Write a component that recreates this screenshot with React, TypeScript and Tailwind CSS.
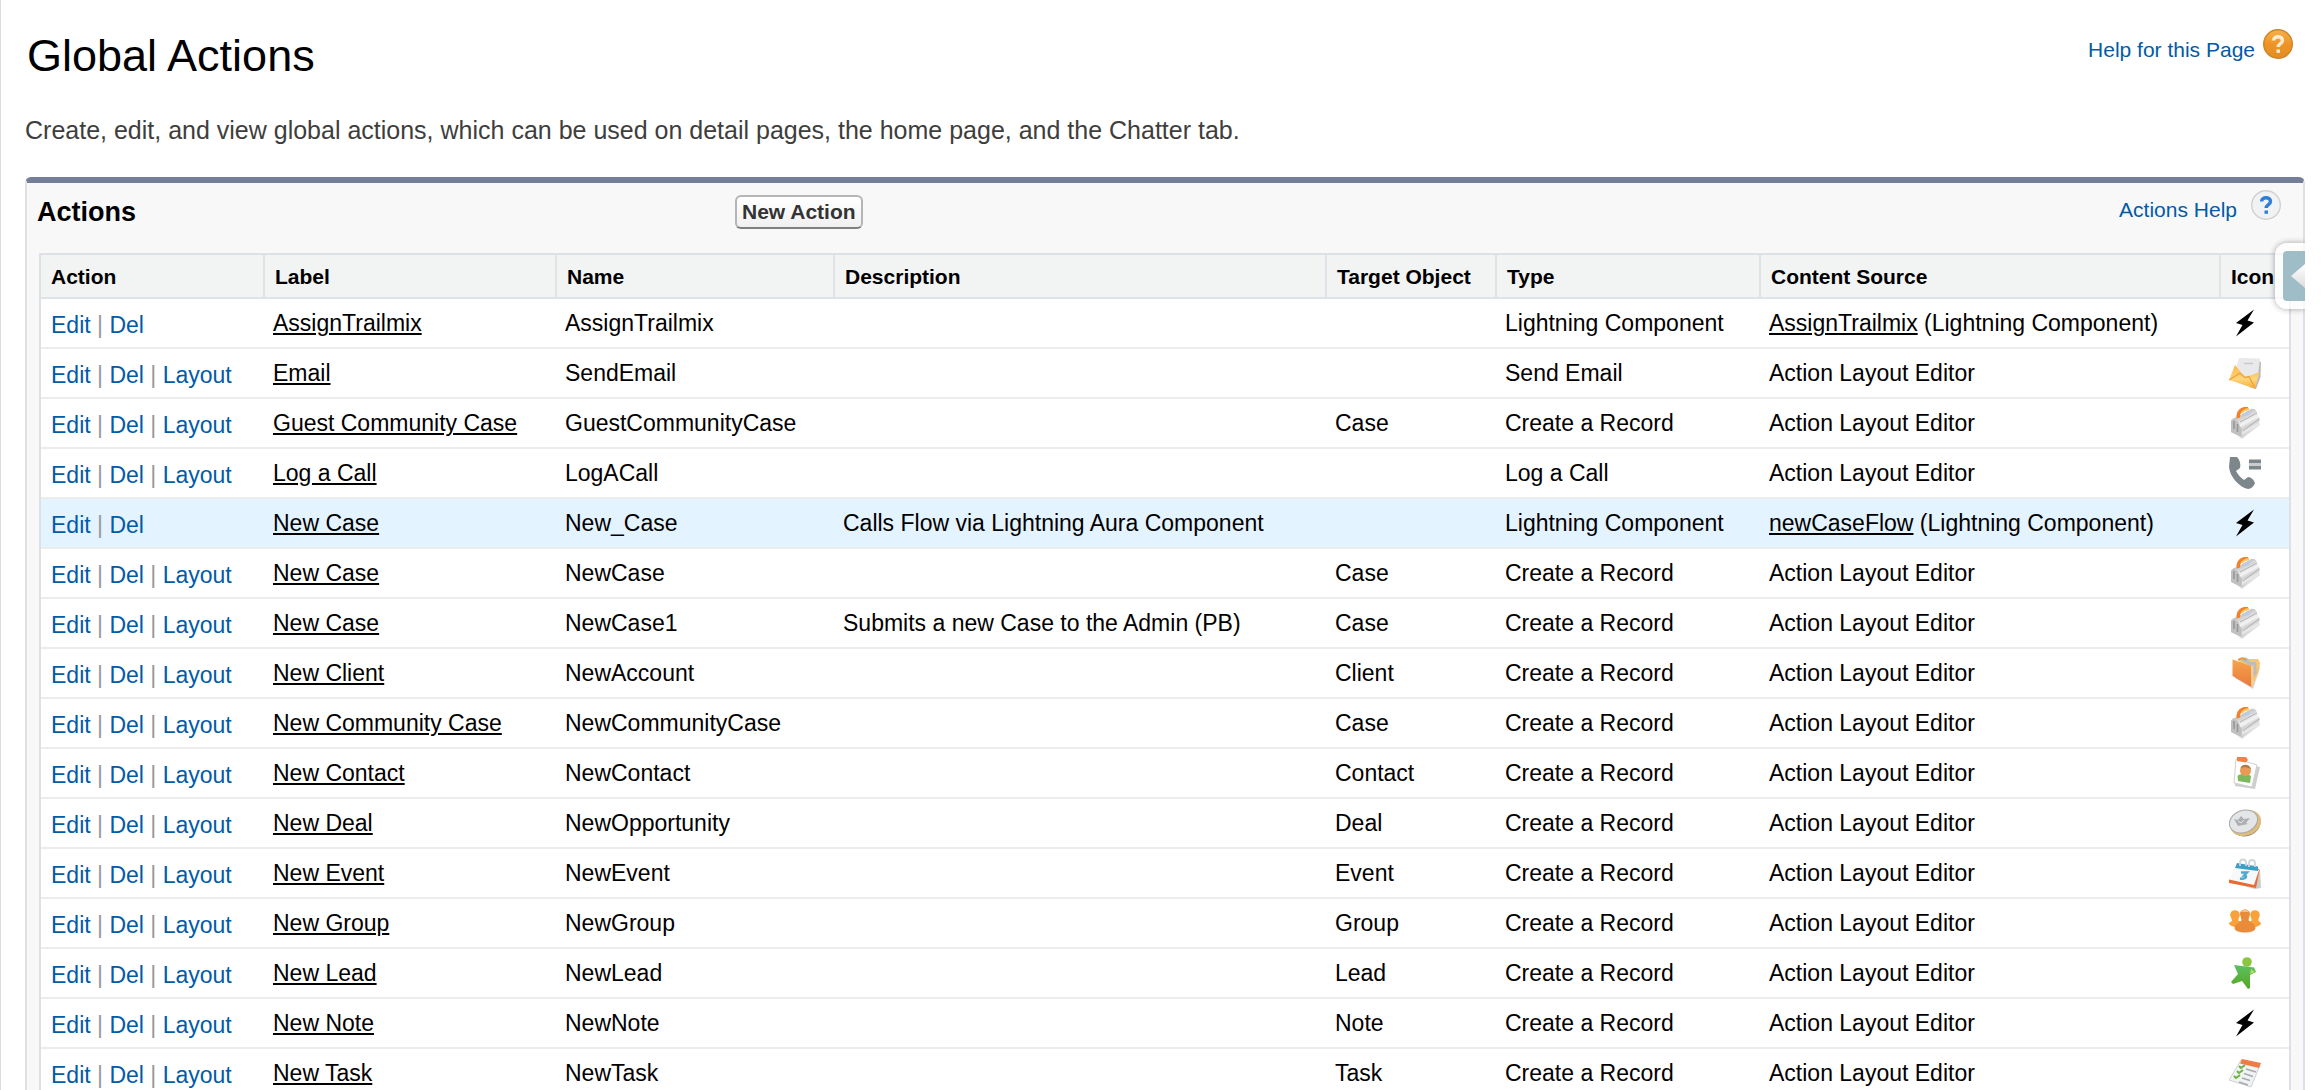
import React from "react";

type Kind =
  | "bolt" | "mail" | "case" | "phone" | "folder" | "contact" | "deal" | "event" | "group" | "lead" | "task";

interface Row {
  label: string;
  name: string;
  description?: string;
  target?: string;
  type: string;
  source?: string;
  icon: Kind;
  layout?: boolean;
  active?: boolean;
}

const REC = "Create a Record";

const rows: Row[] = [
  { label: "AssignTrailmix", name: "AssignTrailmix", type: "Lightning Component", source: "AssignTrailmix", icon: "bolt", layout: false },
  { label: "Email", name: "SendEmail", type: "Send Email", icon: "mail" },
  { label: "Guest Community Case", name: "GuestCommunityCase", target: "Case", type: REC, icon: "case" },
  { label: "Log a Call", name: "LogACall", type: "Log a Call", icon: "phone" },
  { label: "New Case", name: "New_Case", description: "Calls Flow via Lightning Aura Component", type: "Lightning Component", source: "newCaseFlow", icon: "bolt", layout: false, active: true },
  { label: "New Case", name: "NewCase", target: "Case", type: REC, icon: "case" },
  { label: "New Case", name: "NewCase1", description: "Submits a new Case to the Admin (PB)", target: "Case", type: REC, icon: "case" },
  { label: "New Client", name: "NewAccount", target: "Client", type: REC, icon: "folder" },
  { label: "New Community Case", name: "NewCommunityCase", target: "Case", type: REC, icon: "case" },
  { label: "New Contact", name: "NewContact", target: "Contact", type: REC, icon: "contact" },
  { label: "New Deal", name: "NewOpportunity", target: "Deal", type: REC, icon: "deal" },
  { label: "New Event", name: "NewEvent", target: "Event", type: REC, icon: "event" },
  { label: "New Group", name: "NewGroup", target: "Group", type: REC, icon: "group" },
  { label: "New Lead", name: "NewLead", target: "Lead", type: REC, icon: "lead" },
  { label: "New Note", name: "NewNote", target: "Note", type: REC, icon: "bolt" },
  { label: "New Task", name: "NewTask", target: "Task", type: REC, icon: "task" },
];

function Gradients() {
  return (
    <svg className="absolute h-0 w-0" aria-hidden="true">
      <defs>
        <linearGradient id="steel" gradientUnits="userSpaceOnUse" x1="12" y1="4" x2="24" y2="26">
          <stop offset="0" stopColor="#b5b5b5" />
          <stop offset=".3" stopColor="#d8d8d8" />
          <stop offset=".5" stopColor="#f4f4f4" />
          <stop offset=".65" stopColor="#cfcfcf" />
          <stop offset=".8" stopColor="#ebebeb" />
          <stop offset="1" stopColor="#b8b8b8" />
        </linearGradient>
        <linearGradient id="envelope" x1="0" y1="0" x2="0" y2="1">
          <stop offset="0" stopColor="#fbb64a" />
          <stop offset=".6" stopColor="#fdd67c" />
          <stop offset="1" stopColor="#f8ab38" />
        </linearGradient>
        <linearGradient id="folder" x1="0" y1="0" x2="0" y2="1">
          <stop offset="0" stopColor="#f6a44c" />
          <stop offset="1" stopColor="#e8793c" />
        </linearGradient>
        <linearGradient id="person" x1="0" y1="0" x2="0" y2="1">
          <stop offset="0" stopColor="#5cbf63" />
          <stop offset="1" stopColor="#55a81f" />
        </linearGradient>
        <linearGradient id="orb" x1="0" y1="0" x2="0" y2="1">
          <stop offset="0" stopColor="#f6b14e" />
          <stop offset=".5" stopColor="#ef9426" />
          <stop offset="1" stopColor="#e08e26" />
        </linearGradient>
        <linearGradient id="arrow" x1="0" y1="0" x2="0" y2="1">
          <stop offset="0" stopColor="#ffffff" />
          <stop offset="1" stopColor="#dcdcdc" />
        </linearGradient>
      </defs>
    </svg>
  );
}

function art(kind: Kind) {
  switch (kind) {
    case "bolt":
      return <path d="M25 2.500 7 16l6.500 2L7 29.500 25 15.500 18.500 13.500Z" fill="#000" />;
    case "mail":
      return (
        <>
          <path d="M25 3 32 5 31.500 20 27 32 20 30Z" fill="#9d9d9d" opacity=".7" />
          <path d="M10 1 31 1.500 29 18 16 22 7 11Z" fill="#e9e9eb" />
          <path d="M15 6.500h9" stroke="#c9c9cc" strokeWidth="1.500" />
          <path d="M6 8 16 20.500 30.500 15 26 31.500 0 23Z" fill="url(#envelope)" />
          <path d="M0 23 11 16 16 20.500 20 19.500 26 31.500" fill="none" stroke="#f0a13a" strokeWidth="1.300" />
        </>
      );
    case "case":
      return (
        <>
          <path d="M3 25 13 32 31 18 29 12Z" fill="#cfcfcf" opacity=".6" />
          <path d="M2 14Q3 11 8 10L22 2Q27 1 28 6L31 12 29 18 13 30.500 2 25Z" fill="url(#steel)" />
          <path d="M2 14Q6 10 9 15L13 23 12.500 30 2 25Z" fill="#c0c0c0" />
          <path d="M5 14v8M8.500 17v8" stroke="#979797" strokeWidth="1.600" />
          <path d="m11 15 17-9M14 24 30 12" fill="none" stroke="#b3b3b3" strokeWidth="1" />
          <path d="m13 10 4-5 4-1-1 4Z" fill="#b9cbe9" />
          <path d="M9.500 11C8 5 13 1 19 1.500" fill="none" stroke="#f0802c" strokeWidth="3.600" />
          <path d="M12.500 6C15 3 17 2 20 2" fill="none" stroke="#fdc75a" strokeWidth="2.200" />
        </>
      );
    case "phone":
      return (
        <>
          <path d="M1 0 8 0C11 3 12 8 11 11L7 14C9 18 12 21 15 23L19 20C22 20 25 23 26 26 25 29 22 32 19 32 10 30 1 20 0 10Z" fill="#7c868b" />
          <path d="M20 2.500h12v3.500H20zM20 9h12v3.500H20z" fill="#7c868b" />
          <path d="M20 6h12v3H20z" fill="#c8cdcf" />
        </>
      );
    case "folder":
      return (
        <>
          <path d="M6 21 24 32 31 11 29 5Z" fill="#a9a9a9" opacity=".5" />
          <path d="M9 2 16 0 19 2 29 2 31 6 29 17 23 28Z" fill="#fbc56a" />
          <path d="M11 3 18 1 21 5 27 5 28 16 22 24 20 8Z" fill="#bcbcbc" />
          <path d="M9 3 13 1 17 3" fill="none" stroke="#ef8a45" strokeWidth="1.500" />
          <path d="M3.500 2.500 22 9 22.500 30 3.500 19Z" fill="url(#folder)" />
          <path d="M22 9 24.500 8 24 29 22.500 30Z" fill="#fbd084" />
        </>
      );
    case "contact":
      return (
        <>
          <path d="M7 6 31 10 26 32 6 29Z" fill="#b9b9b9" opacity=".7" />
          <path d="M7 2 22 6 28 8 23 30 5 26Z" fill="#fff" stroke="#cfcfcf" />
          <path d="M8 0h9l2 3-2 2.500-9-1.500Z" fill="#f08248" />
          <path d="M8.500 19C11 16 20 17 22 19L21 26 9 24Z" fill="#7db85c" />
          <circle cx="16.500" cy="13.500" r="5.500" fill="#e99a55" />
          <path d="M11.500 11C13 6 21 7 22 12 18 10 15 10 11.500 11Z" fill="#a97c4b" />
        </>
      );
    case "deal":
      return (
        <>
          <ellipse cx="17" cy="17" rx="15" ry="12" fill="#8d8571" transform="rotate(-22 17 17)" />
          <ellipse cx="16.500" cy="16" rx="16" ry="12.500" fill="#dfbd7b" transform="rotate(-22 16.500 16)" />
          <ellipse cx="14.500" cy="14.500" rx="14.500" ry="11" fill="#e3e5e7" stroke="#a7a9a8" transform="rotate(-22 14.500 14.500)" />
          <path d="m5 12 4 1 3-4 3 3 6-1-4 5 2 1-10 2Z" fill="#adb0b3" />
          <path d="m9 14 3 2 3-3" fill="none" stroke="#e3e5e7" />
        </>
      );
    case "event":
      return (
        <>
          <path d="M4 26 26 32 32 31 31 12Z" fill="#a9a9a9" opacity=".6" />
          <path d="M0 22 25 27 29 11.500 30.500 13 27 31 0 26Z" fill="#e96a32" />
          <path d="M6 10 30 13 25 28 0 22.500Z" fill="#f7f8f9" />
          <path d="m8 6 21 3.500v4.500L6 11Z" fill="#3b9fc6" />
          <path d="M11 9V5.500a3 3 0 0 1 6 0V9M20 10V6a3 3 0 0 1 6 0v4" fill="none" stroke="#cfd5d9" strokeWidth="1.800" />
          <path d="M12 15.500h6l-3 3c4 0 2 4-4 3" fill="none" stroke="#4fa9cd" strokeWidth="2.400" />
        </>
      );
    case "group":
      return (
        <>
          <g fill="#f9a13a">
            <circle cx="6" cy="8" r="4.800" />
            <circle cx="26" cy="8" r="4.800" />
            <path d="M2.500 11h7v3h4l-5 6C3 20 0 18 0 16l3-2ZM22.500 11h7v3l2.500 2c0 2-3 4-8 4l-5-6h3.500Z" />
          </g>
          <path d="M11 7c0-6 10-6 10 0l-1.500 6 1 2c4 1 6 4 6 6 0 6-21 6-21 0 0-2 2-5 6-6l1-2Z" fill="#e98b38" />
          <path d="M12.500 5c0-3 7-3 7 0" fill="#f7bf85" />
        </>
      );
    case "lead":
      return (
        <>
          <circle cx="18" cy="5" r="4.800" fill="#8cc63f" />
          <path d="M5 8 17 9.500 25 10.500 27 15 21 18 21 31 19 32 13 24 4 27 2 25 9 17Z" fill="url(#person)" />
          <path d="m22 12 4 3-5 2" fill="#b6dc5c" />
        </>
      );
    case "task":
      return (
        <>
          <path d="M12 3 31 8 22 30 0 23Z" fill="#f1f2f3" stroke="#cdd0d2" />
          <path d="M13 2 32 6 30 11 11 6.500Z" fill="#ee7d45" />
          <path d="m17 12 10 3M15 16.500l9 3M13 21l8 2.500M10 25l9 3" stroke="#a7acb0" strokeWidth="1.600" />
          <path d="m10 9 2 2 4-3M8 14l2 2 4-3M5 19l2 2 4-3" fill="none" stroke="#6cb33f" strokeWidth="2" />
        </>
      );
  }
}

function ActionIcon({ kind }: { kind: Kind }) {
  return (
    <svg viewBox="0 0 32 32" className="block h-8 w-8" role="img" aria-label={kind}>
      {art(kind)}
    </svg>
  );
}

function HelpOrb({ warm }: { warm?: boolean }) {
  return (
    <svg viewBox="0 0 30 30" className="block h-[30px] w-[30px]" aria-hidden="true">
      <circle cx="15" cy="15" r="14.300" fill={warm ? "url(#orb)" : "#f1f2f4"} stroke={warm ? "#cf8426" : "#d0d0d0"} strokeWidth="1.400" />
      <path
        d="M10.500 11.500c.3-5 9-5 9 0 0 3.200-4.300 3-4.300 6.500"
        fill="none"
        stroke={warm ? "#fdebcf" : "#2f7fd6"}
        strokeWidth="3.400"
      />
      <path d="M13.500 20.500h3.500v3.300h-3.500z" fill={warm ? "#fdebcf" : "#2f7fd6"} />
    </svg>
  );
}

function SideTab() {
  return (
    <div className="absolute top-[52px] -right-0.5 overflow-hidden py-2 pl-2">
      <button
        type="button"
        aria-label="Open sidebar"
        className="flex h-[66px] w-[30px] items-center justify-end rounded-l-xl bg-white/70 shadow-[0_0_6px_rgba(0,0,0,0.35)]"
      >
        <span className="flex h-[50px] w-[22px] items-center justify-end rounded-l-sm bg-[#9fbdc7]">
          <svg viewBox="0 0 14 26" className="h-[26px] w-[14px]" aria-hidden="true">
            <path d="M14 1v24L0 13Z" fill="url(#arrow)" />
          </svg>
        </span>
      </button>
    </div>
  );
}

const link = "text-[#015ba7] hover:underline";
const th = "border-r-2 border-b-2 border-[#dfe3e7] px-2.5 pt-2.5 pb-2 text-left align-top text-[21px] leading-6 font-bold whitespace-nowrap last:border-r-0";
const td = "h-[50px] border-b-2 border-[#ececec] px-2 pt-[11px] align-top whitespace-nowrap";

export default function App() {
  return (
    <div className="h-screen overflow-hidden border-l border-[#dcdcdc] bg-white pr-[17px] pl-6 font-['Liberation_Sans',Arial,sans-serif] text-[23px] leading-[26px] text-black">
      <Gradients />
      <header className="flex items-start justify-between pt-[29px] pr-3 pl-0.5">
        <h1 className="text-[45px] leading-[54px]">Global Actions</h1>
        <a href="#help" className={"flex items-start gap-2 text-[21px] leading-6 " + link}>
          <span className="pt-[9px]">Help for this Page</span>
          <HelpOrb warm />
        </a>
      </header>
      <p className="pt-[33px] text-[25px] leading-7 text-[#3e3e3c]">
        Create, edit, and view global actions, which can be used on detail pages, the home page, and the Chatter tab.
      </p>

      <section className="relative mt-[33px] rounded-t-md border-x-2 border-t-6 border-x-[#dde1e5] border-t-[#747e96] bg-[#f8f8f8] px-3">
        <div className="flex h-[70px] items-start">
          <h2 className="w-[696px] pt-[13px] text-[27px] leading-8 font-bold -indent-0.5">Actions</h2>
          <button
            type="button"
            className="mt-3 h-[34px] rounded-md border-2 border-[#b5b5b5] border-b-[#7f7f7f] bg-linear-to-b from-white to-[#f0f0f0] px-[5px] text-[21px] leading-7 font-bold text-[#333]"
          >
            New Action
          </button>
          <a href="#actions-help" className={"mt-[7px] mr-2.5 ml-auto flex items-start gap-[14px] text-[21px] leading-6 " + link}>
            <span className="pt-2">Actions Help</span>
            <HelpOrb />
          </a>
        </div>

        <div className="border-x-2 border-t-2 border-[#dde1e5] bg-white">
          <table className="w-full table-fixed border-separate border-spacing-0">
            <colgroup>
              <col className="w-[224px]" />
              <col className="w-[292px]" />
              <col className="w-[278px]" />
              <col className="w-[492px]" />
              <col className="w-[170px]" />
              <col className="w-[264px]" />
              <col className="w-[460px]" />
              <col className="w-[68px]" />
            </colgroup>
            <thead className="bg-[#f2f3f3]">
              <tr>
                {["Action", "Label", "Name", "Description", "Target Object", "Type", "Content Source", "Icon"].map((h) => (
                  <th key={h} scope="col" className={th}>{h}</th>
                ))}
              </tr>
            </thead>
            <tbody>
              {rows.map((r) => (
                <tr key={r.name} className={r.active ? "bg-[#e3f3ff]" : "bg-white"}>
                  <td className="h-[50px] border-b-2 border-[#ececec] px-2.5 pt-[14px] align-top leading-6 whitespace-nowrap text-[#999]">
                    <a href="#edit" className={link}>Edit</a> | <a href="#del" className={link}>Del</a>
                    {r.layout !== false && (
                      <> | <a href="#layout" className={link}>Layout</a></>
                    )}
                  </td>
                  <td className={td}>
                    <a href="#label" className="underline">{r.label}</a>
                  </td>
                  <td className={td}>{r.name}</td>
                  <td className={td}>{r.description}</td>
                  <td className={td}>{r.target}</td>
                  <td className={td}>{r.type}</td>
                  <td className={td}>
                    {r.source ? (
                      <><a href="#source" className="underline">{r.source}</a> (Lightning Component)</>
                    ) : (
                      "Action Layout Editor"
                    )}
                  </td>
                  <td className="h-[50px] border-b-2 border-[#ececec] px-2 pt-2 align-top">
                    <ActionIcon kind={r.icon} />
                  </td>
                </tr>
              ))}
            </tbody>
          </table>
        </div>
        <SideTab />
      </section>
    </div>
  );
}
